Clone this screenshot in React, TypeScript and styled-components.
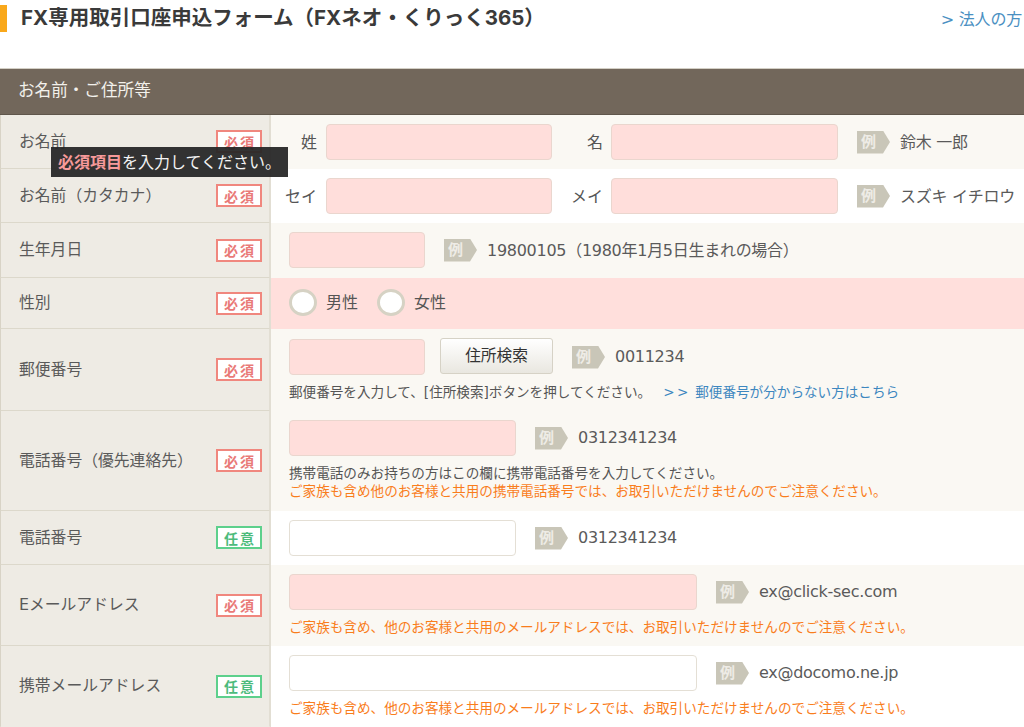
import React from "react";
import styled, { createGlobalStyle } from "styled-components";

const Global = createGlobalStyle`
  html, body { margin: 0; padding: 0; background: #fff; }
  body {
    width: 1024px; height: 727px; overflow: hidden;
    font-family: "DejaVu Sans", "Noto Sans CJK JP", sans-serif;
    color: #555;
  }
`;

const TitleBar = styled.div`
  height: 68px; display: flex; justify-content: space-between; align-items: flex-start;
`;
const Title = styled.h1`
  margin: 5px 0 0; height: 27px; padding-left: 14px; border-left: 7px solid #f9a81b;
  font: 700 20.5px/26px "Inter", "Noto Sans CJK JP", sans-serif; color: #3a3a3a;
`;
const CorpLink = styled.a`
  margin: 9px 2px 0 0; font-size: 16px; line-height: 22px; color: #4a90c2; letter-spacing: -0.2px;
`;
const SectionHead = styled.div`
  height: 40px; padding: 0 0 5px 18px; display: flex; align-items: center;
  border-top: 1px solid #d3cfc5; border-bottom: 1px solid #5f564b;
  background: #72675b; color: #f3f1ec; font-size: 16.6px;
`;
const Row = styled.div<{ $h: number }>`
  position: relative; display: grid; grid-template-columns: 271px 1fr; height: ${(p) => p.$h}px;
`;
const Head = styled.div<{ $open?: boolean }>`
  position: relative; z-index: 1; box-sizing: border-box; height: calc(100% + 1px);
  padding: 0 7px 0 18px; display: flex; align-items: center; justify-content: space-between;
  background: #eeebe4; border-left: 1px solid #d8d3c6; border-right: 2px solid #e2ded3;
  border-bottom: 2px solid ${(p) => (p.$open ? "transparent" : "#dcd8cb")};
  font-size: 15.8px; color: #5a5a5a;
`;
const HeadLabel = styled.span`
  margin-top: -3px;
`;
const Badge = styled.span<{ $optional?: boolean }>`
  box-sizing: border-box; width: 46px; height: 23px; background: #fff; display: flex; align-items: center; justify-content: center;
  border: 2px solid ${(p) => (p.$optional ? "#5dd08c" : "#f0877e")};
  color: ${(p) => (p.$optional ? "#4dbb7c" : "#e97a78")};
  font-size: 14px; font-weight: 700; letter-spacing: 2px; padding-left: 2px;
`;
const Cell = styled.div<{ $bg: string; $tight?: boolean; $top?: number }>`
  box-sizing: border-box; padding: ${(p) => p.$top ?? 9}px 0 0 ${(p) => (p.$tight ? 14 : 18)}px; background: ${(p) => p.$bg};
`;
const Line = styled.div`
  display: flex; align-items: center; height: 36px;
`;
const NameLabel = styled.label<{ $gap?: number; $after?: number }>`
  width: 32px; margin: -2px ${(p) => p.$after ?? 9}px 0 ${(p) => p.$gap ?? 0}px; text-align: right; font-size: 16px; color: #555; white-space: nowrap;
`;
const Field = styled.div<{ $w: number; $req?: boolean }>`
  box-sizing: border-box; width: ${(p) => p.$w}px; height: 36px; border-radius: 4px; flex: none;
  background: ${(p) => (p.$req ? "#ffdedb" : "#fff")};
  border: 1.5px solid ${(p) => (p.$req ? "#ead6ce" : "#e4dfd5")};
`;
const Tag = styled.span`
  box-sizing: border-box; width: 33px; height: 23px; margin: 0 10px 0 19px; flex: none; padding: 0 0 3px 4px;
  display: flex; align-items: center; background: #c9c6b8; color: #eeece6; font-size: 15px; font-weight: 700;
  clip-path: polygon(0 0, 26px 0, 33px 50%, 26px 100%, 0 100%);
`;
const Sample = styled.span`
  font-size: 16px; color: #5a5a5a; white-space: nowrap; margin-top: -2px; letter-spacing: -0.28px;
`;
const Note = styled.div<{ $warn?: boolean; $top?: number }>`
  margin-top: ${(p) => p.$top ?? 8}px; font-size: 13.6px; line-height: 18px; white-space: nowrap;
  color: ${(p) => (p.$warn ? "#f97d1c" : "#555")};
`;
const HelpLink = styled.a`
  margin-left: 12px; color: #3d87bf;
`;
const Chevrons = styled.span`
  letter-spacing: 2.5px;
`;
const Radio = styled.span`
  box-sizing: border-box; width: 28px; height: 27px; border-radius: 50%; background: #fff; border: 3px solid #d6d2c4; flex: none;
`;
const RadioLabel = styled.span`
  margin: -2px 19px 0 9px; font-size: 16px; color: #555;
`;
const RadioCell = styled(Cell)`
  padding-top: 6px;
`;
const SearchButton = styled.button`
  box-sizing: border-box; width: 113px; height: 36px; margin: -2px 0 0 15px; border: 1px solid #d6d2c6; border-radius: 3px; padding: 0 0 3px;
  background: linear-gradient(#fff, #e9e7e0); font: 400 15.7px "Noto Sans CJK JP", sans-serif; color: #333;
`;
const Tooltip = styled.div`
  position: absolute; z-index: 5; left: 51px; top: 32px; width: 237px; height: 30px; box-sizing: border-box; padding: 0 0 3px 7px;
  display: flex; align-items: center; background: rgba(38, 38, 38, 0.94); color: #f4f4f4; font-size: 16px; white-space: nowrap;
  b { color: #f79a9a; }
`;

const CREAM = "#faf8f3";
const WHITE = "#fff";

const Ex = ({ children }: { children: React.ReactNode }) => (
  <>
    <Tag>例</Tag>
    <Sample>{children}</Sample>
  </>
);
const MAIL_WARN = "ご家族も含め、他のお客様と共用のメールアドレスでは、お取引いただけませんのでご注意ください。";

export default function App() {
  return (
    <>
      <Global />
      <TitleBar>
        <Title>FX専用取引口座申込フォーム（FXネオ・くりっく365）</Title>
        <CorpLink>&gt; 法人の方</CorpLink>
      </TitleBar>
      <SectionHead>お名前・ご住所等</SectionHead>

      <Row $h={54}>
        <Head><HeadLabel>お名前</HeadLabel><Badge>必須</Badge></Head>
        <Cell $bg={CREAM} $tight>
          <Line>
            <NameLabel>姓</NameLabel><Field $w={226} $req />
            <NameLabel $gap={19} $after={8}>名</NameLabel><Field $w={227} $req />
            <Ex>鈴木 一郎</Ex>
          </Line>
        </Cell>
        <Tooltip><span><b>必須項目</b>を入力してください。</span></Tooltip>
      </Row>
      <Row $h={54}>
        <Head><HeadLabel>お名前（カタカナ）</HeadLabel><Badge>必須</Badge></Head>
        <Cell $bg={WHITE} $tight>
          <Line>
            <NameLabel>セイ</NameLabel><Field $w={226} $req />
            <NameLabel $gap={19} $after={8}>メイ</NameLabel><Field $w={227} $req />
            <Ex>スズキ イチロウ</Ex>
          </Line>
        </Cell>
      </Row>
      <Row $h={55}>
        <Head><HeadLabel>生年月日</HeadLabel><Badge>必須</Badge></Head>
        <Cell $bg={CREAM}>
          <Line><Field $w={136} $req /><Ex>19800105（1980年1月5日生まれの場合）</Ex></Line>
        </Cell>
      </Row>
      <Row $h={51}>
        <Head><HeadLabel>性別</HeadLabel><Badge>必須</Badge></Head>
        <RadioCell $bg="#ffdfdc">
          <Line>
            <Radio /><RadioLabel>男性</RadioLabel>
            <Radio /><RadioLabel>女性</RadioLabel>
          </Line>
        </RadioCell>
      </Row>
      <Row $h={82}>
        <Head><HeadLabel>郵便番号</HeadLabel><Badge>必須</Badge></Head>
        <Cell $bg={CREAM} $top={10}>
          <Line>
            <Field $w={136} $req />
            <SearchButton>住所検索</SearchButton>
            <Ex>0011234</Ex>
          </Line>
          <Note>郵便番号を入力して、[住所検索]ボタンを押してください。<HelpLink><Chevrons>&gt;&gt;</Chevrons> 郵便番号が分からない方はこちら</HelpLink></Note>
        </Cell>
      </Row>
      <Row $h={100}>
        <Head><HeadLabel>電話番号（優先連絡先）</HeadLabel><Badge>必須</Badge></Head>
        <Cell $bg={CREAM}>
          <Line><Field $w={227} $req /><Ex>0312341234</Ex></Line>
          <Note>携帯電話のみお持ちの方はこの欄に携帯電話番号を入力してください。</Note>
          <Note $warn $top={0}>ご家族も含め他のお客様と共用の携帯電話番号では、お取引いただけませんのでご注意ください。</Note>
        </Cell>
      </Row>
      <Row $h={54}>
        <Head><HeadLabel>電話番号</HeadLabel><Badge $optional>任意</Badge></Head>
        <Cell $bg={WHITE}>
          <Line><Field $w={227} /><Ex>0312341234</Ex></Line>
        </Cell>
      </Row>
      <Row $h={81}>
        <Head><HeadLabel>Eメールアドレス</HeadLabel><Badge>必須</Badge></Head>
        <Cell $bg={CREAM}>
          <Line><Field $w={408} $req /><Ex>ex@click-sec.com</Ex></Line>
          <Note $warn>{MAIL_WARN}</Note>
        </Cell>
      </Row>
      <Row $h={81}>
        <Head $open><HeadLabel>携帯メールアドレス</HeadLabel><Badge $optional>任意</Badge></Head>
        <Cell $bg={WHITE}>
          <Line><Field $w={408} /><Ex>ex@docomo.ne.jp</Ex></Line>
          <Note $warn>{MAIL_WARN}</Note>
        </Cell>
      </Row>
    </>
  );
}
